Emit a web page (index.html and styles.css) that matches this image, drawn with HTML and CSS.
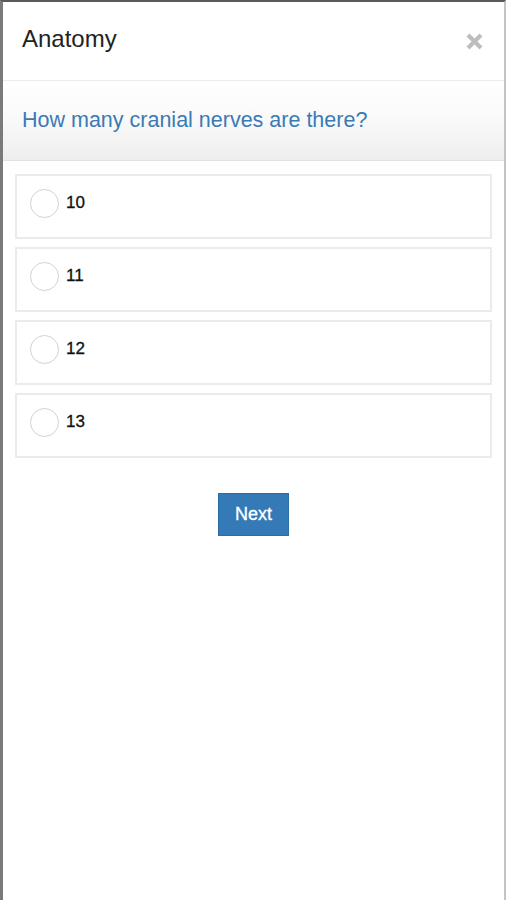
FILE: index.html
```html
<!DOCTYPE html>
<html lang="en">
<head>
<meta charset="utf-8">
<title>Anatomy</title>
<link rel="stylesheet" href="styles.css">
</head>
<body>
<div class="frame">
  <header class="header">
    <h1 class="title">Anatomy</h1>
    <span class="close" aria-label="Close">
      <svg width="19" height="19" viewBox="0 0 19 19"><path d="M3 3 L16 16 M16 3 L3 16" stroke="#bdbdbd" stroke-width="4.2" stroke-linecap="butt" fill="none"/></svg>
    </span>
  </header>
  <div class="question">How many cranial nerves are there?</div>
  <div class="options">
    <label class="option"><span class="radio"></span><span class="label">10</span></label>
    <label class="option"><span class="radio"></span><span class="label">11</span></label>
    <label class="option"><span class="radio"></span><span class="label">12</span></label>
    <label class="option"><span class="radio"></span><span class="label">13</span></label>
  </div>
  <div class="actions">
    <button class="next">Next</button>
  </div>
</div>
</body>
</html>
```
FILE: styles.css
```css
html, body {
  margin: 0;
  padding: 0;
  background: #fff;
}
body {
  font-family: "Liberation Sans", Arial, sans-serif;
}
.frame {
  box-sizing: border-box;
  width: 506px;
  height: 900px;
  border-top: 2px solid #5a5a5a;
  border-left: 3px solid #7a7a7a;
  border-right: 2px solid #c4c4c4;
  background: #fff;
}
.header {
  height: 78px;
  display: flex;
  align-items: center;
  justify-content: space-between;
  padding: 0 20px 0 19px;
  border-bottom: 1px solid #ececec;
}
.title {
  margin: 0;
  font-size: 24px;
  font-weight: normal;
  color: #222;
  position: relative;
  top: -2px;
}
.close {
  display: flex;
  position: relative;
  top: 0;
}
.question {
  height: 79px;
  display: flex;
  align-items: center;
  padding-left: 19px;
  font-size: 21.5px;
  color: #3a7bb5;
  background: linear-gradient(to bottom, #ffffff 0%, #f9f9f9 50%, #eeeeee 100%);
  border-bottom: 1px solid #e2e2e2;
}
.options {
  display: flex;
  flex-direction: column;
  gap: 8px;
  padding: 13px 12px 0 12px;
}
.option {
  display: flex;
  align-items: center;
  gap: 7px;
  border: 2px solid #ebebeb;
  padding: 13px 13px 19px 13px;
}
.radio {
  box-sizing: border-box;
  width: 29px;
  height: 29px;
  border-radius: 50%;
  border: 1.5px solid #d2d2d2;
  background: #fff;
  flex: none;
}
.label {
  font-size: 17px;
  color: #111;
  position: relative;
  top: -1px;
  -webkit-text-stroke: 0.3px #111;
}
.actions {
  display: flex;
  justify-content: center;
  padding-top: 35px;
}
.next {
  width: 71px;
  height: 43px;
  border: 1px solid #2e6da4;
  background: #337ab7;
  color: #fff;
  font-family: "Liberation Sans", Arial, sans-serif;
  font-size: 18px;
  padding: 0;
  -webkit-text-stroke: 0.3px #fff;
}
```
